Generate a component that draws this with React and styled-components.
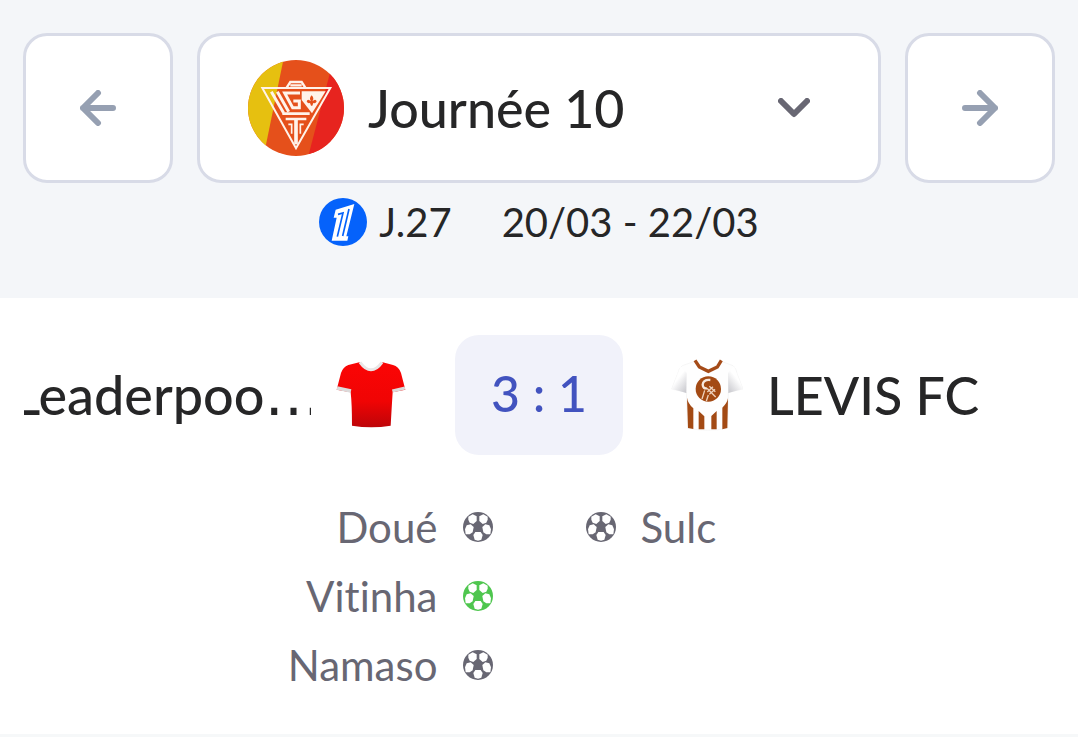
import React, { useState } from 'react';
import styled, { createGlobalStyle, ThemeProvider } from 'styled-components';

const theme = {
  colors: {
    page: '#ffffff',
    header: '#f4f6f9',
    border: '#d8dbe7',
    text: '#262627',
    muted: '#686773',
    arrow: '#96a0b2',
    score: '#4253bf',
    scoreBg: '#f1f2fa',
    green: '#4fc64f',
    divider: '#f6f8f9',
  },
};

const GlobalStyle = createGlobalStyle`
  * {
    box-sizing: border-box;
  }

  body {
    margin: 0;
    background: #ffffff;
    font-family: Lato, "Open Sans", sans-serif;
    font-variant-ligatures: none;
  }
`;

const Header = styled.header`
  padding: 33px 23px 52px;
  background: ${props => props.theme.colors.header};
`;

const DayPicker = styled.nav`
  display: flex;
  gap: 24px;
`;

const ArrowButton = styled.button`
  display: flex;
  flex: none;
  align-items: center;
  justify-content: center;
  width: 150px;
  height: 150px;
  padding: 0;
  border: 3px solid ${props => props.theme.colors.border};
  border-radius: 24px;
  background: ${props => props.theme.colors.page};
  color: ${props => props.theme.colors.arrow};
  cursor: pointer;
`;

const DayBox = styled.label`
  display: flex;
  flex: 1;
  align-items: center;
  gap: 24px;
  min-width: 0;
  padding: 0 68px 0 48px;
  border: 3px solid ${props => props.theme.colors.border};
  border-radius: 24px;
  background: ${props => props.theme.colors.page};
  color: ${props => props.theme.colors.muted};

  svg {
    flex: none;
  }
`;

const DaySelect = styled.select`
  flex: 1;
  min-width: 0;
  height: 72px;
  padding: 0;
  border: 0;
  outline: 0;
  appearance: none;
  background: transparent;
  color: ${props => props.theme.colors.text};
  font-family: inherit;
  font-size: 52px;
  font-weight: 500;
`;

const DayInfo = styled.div`
  display: flex;
  align-items: center;
  justify-content: center;
  gap: 50px;
  margin-top: 15px;
  color: ${props => props.theme.colors.text};
  font-size: 40px;
  line-height: 48px;
`;

const LeagueDay = styled.div`
  display: flex;
  align-items: center;
  gap: 12px;
`;

const Match = styled.article`
  padding: 37px 24px 45px;
  border-bottom: 3px solid ${props => props.theme.colors.divider};
`;

const Teams = styled.div`
  display: grid;
  grid-template-columns: 1fr 168px 1fr;
  align-items: center;
  gap: 48px;
`;

const Team = styled.div`
  display: flex;
  align-items: center;
  gap: 24px;
  min-width: 0;

  svg {
    flex: none;
  }
`;

const TeamName = styled.div`
  display: flex;
  flex: 1;
  justify-content: ${props => (props.$home ? 'center' : 'flex-start')};
  min-width: 0;
  overflow: hidden;
  color: ${props => props.theme.colors.text};
  font-size: ${props => (props.$home ? '54px' : '52px')};
  font-weight: 500;
  line-height: 64px;
  white-space: nowrap;
`;

const Ellipsis = styled.span`
  font-family: "DejaVu Sans", sans-serif;
  font-size: 58px;
  font-weight: 400;
`;

const Score = styled.div`
  padding: 28px 0 32px;
  border-radius: 24px;
  background: ${props => props.theme.colors.scoreBg};
  color: ${props => props.theme.colors.score};
  font-size: 50px;
  font-weight: 500;
  line-height: 60px;
  text-align: center;
`;

const Scorers = styled.div`
  display: grid;
  grid-template-columns: 1fr 1fr;
  gap: 91px;
  margin-top: 48px;
`;

const ScorerList = styled.ul`
  display: flex;
  flex-direction: column;
  align-items: ${props => (props.$home ? 'flex-end' : 'flex-start')};
  gap: 21px;
  margin: 0;
  padding: 0;
  list-style: none;
`;

const Scorer = styled.li`
  display: flex;
  align-items: center;
  gap: 24px;
  color: ${props => props.theme.colors.muted};
  font-size: 42px;
  line-height: 48px;
`;

const Arrow = ({ right }) => (
  <svg width="36" height="36" viewBox="0 0 36 36" fill="none" stroke="currentColor" strokeWidth="6" strokeLinecap="round" strokeLinejoin="round">
    {right ? <path d="M3 18h30M18 3l15 15l-15 15" /> : <path d="M33 18H3M18 3L3 18l15 15" />}
  </svg>
);

const Chevron = () => (
  <svg width="32" height="20" viewBox="0 0 32 20" fill="none" stroke="currentColor" strokeWidth="6" strokeLinecap="round" strokeLinejoin="round">
    <path d="M3 3l13 13L29 3" />
  </svg>
);

const Crest = () => (
  <svg width="96" height="96" viewBox="36 28 288 288" aria-hidden="true">
    <clipPath id="crest">
      <circle cx="180" cy="172" r="144" />
    </clipPath>
    <g clipPath="url(#crest)">
      <path fill="#e5501b" d="M36 28h288v288H36z" />
      <path fill="#e6c010" d="M36 28h106L83 316H36z" />
      <path fill="#e7241f" d="M292 28h32v288H217z" />
    </g>
    <g fill="none" stroke="#fff3ea">
      <path strokeWidth="6" d="M79 112h204L180 293z" />
      <path strokeWidth="7" d="M152 111l11-17h34l11 17M163 104h34" />
      <path strokeWidth="9" d="M106 123l37 64M124 123l34 60M192 127h-46l24 44h20v-20h-18" />
      <path strokeWidth="8" d="M139 189h82M149 205h62" />
      <path strokeWidth="11" d="M180 205v76" />
      <path strokeWidth="5" d="M157 221h10v28M203 221h-10v28" />
    </g>
    <path fill="#fff3ea" d="M197 122h72l-41 66l-31-40z" />
    <path fill="#e5501b" d="M227 134q9 9 2 18q10-10 13 0q-1 7-10 5l-3 8h-4l-3-8q-9 2-10-5q3-10 13 0q-7-9 2-18z" />
  </svg>
);

const LeagueLogo = () => (
  <svg width="48" height="48" viewBox="27 25 144 144" aria-hidden="true">
    <circle cx="99" cy="97" r="72" fill="#0562fb" />
    <path fill="#fff" d="M77 60L133 43L109 140h6l-3 13H65l15-69H71z" />
    <path fill="none" stroke="#0562fb" strokeWidth="5" d="M84 74l15-4L82 141M98 139L117 58" />
  </svg>
);

const RedShirt = () => (
  <svg width="72" height="72" viewBox="30 27 216 216" aria-hidden="true">
    <defs>
      <linearGradient id="red" x1="0" y1="0" x2="0" y2="1">
        <stop offset="0" stopColor="#fb0505" />
        <stop offset="0.6" stopColor="#f00404" />
        <stop offset="1" stopColor="#bd0509" />
      </linearGradient>
    </defs>
    <path fill="url(#red)" d="M103 37q35 46 70 0l31 8q17 4 24 24l13 50l-38 8q-2 30-6 100q-58 10-116 0q0-64-4-100l-42-8l13-50q6-18 22-24z" />
    <path fill="none" stroke="#e9e6e6" strokeWidth="9" d="M105 37q33 45 66 0" />
    <path fill="none" stroke="#dcdada" strokeWidth="10" d="M36 114l42 9M202 123l38-9" />
  </svg>
);

const StripedShirt = () => (
  <svg width="72" height="72" viewBox="33 42 216 216" aria-hidden="true">
    <defs>
      <linearGradient id="sleeveLeft" x1="0.2" y1="0" x2="0.9" y2="1">
        <stop offset="0.4" stopColor="#ffffff" />
        <stop offset="1" stopColor="#c9c9ce" />
      </linearGradient>
      <linearGradient id="sleeveRight" x1="0.8" y1="0" x2="0.1" y2="1">
        <stop offset="0.4" stopColor="#ffffff" />
        <stop offset="1" stopColor="#c9c9ce" />
      </linearGradient>
    </defs>
    <path fill="#fefefe" stroke="#f1f1f1" strokeWidth="2" d="M104 49l40 28l40-28l35 13q10 8 12 24l18 46l-44 10l-2 108q-60 11-120 0l-4-108l-44-10l18-46q4-18 14-24z" />
    <path fill="url(#sleeveLeft)" d="M62 64L36 132l43 12L80 84z" />
    <path fill="url(#sleeveRight)" d="M222 64l26 68l-43 12l-1-60z" />
    <path fill="none" stroke="#a54b18" strokeWidth="10" d="M105 46l13 20l27 13l27-13l12-20" />
    <circle cx="145" cy="132" r="38" fill="#a34a14" />
    <path fill="none" stroke="#f7e9df" strokeWidth="7" d="M151 105q-21-2-23 14q1 13 13 11" />
    <g fill="none" stroke="#eed2bd" strokeWidth="4">
      <path d="M141 130l26 26M148 124l18 16M142 141l17-16M148 148l17-15M134 136l-8 26M145 150l-6 18" />
    </g>
    <path fill="#a34a14" d="M81 158q3 18 19 32v62l-16-3zM116 198l17 16v39h-17zM154 213l16-15v55h-16zM187 188q14-13 17-28l-2 89l-15 4z" />
  </svg>
);

const Ball = () => (
  <svg width="32" height="32" viewBox="36 28 96 96" aria-hidden="true">
    <circle cx="84" cy="76" r="45" fill="currentColor" />
    <g fill="#fff">
      <path d="M55 45l13-7l12 6v14l-10 9l-11-4l-4-9z" />
      <path d="M113 45l-13-7l-12 6v14l10 9l11-4l4-9z" />
      <path d="M45 83l5-12l12-3l9 8l-3 16l-9 6H47z" />
      <path d="M123 83l-5-12l-12-3l-9 8l3 16l9 6h12z" />
      <path d="M76 91h16l6 9l-4 14l-10 3l-10-3l-4-14z" />
    </g>
  </svg>
);

const BallColor = styled.span`
  display: flex;
  color: ${props => (props.$highlight ? props.theme.colors.green : props.theme.colors.muted)};
`;

const homeScorers = [
  { name: 'Doué' },
  { name: 'Vitinha', highlight: true },
  { name: 'Namaso' },
];

const awayScorers = [{ name: 'Sulc' }];

const App = () => {
  const [day, setDay] = useState('10');

  return (
    <ThemeProvider theme={theme}>
      <GlobalStyle />
      <Header>
        <DayPicker>
          <ArrowButton type="button" aria-label="Journée précédente">
            <Arrow />
          </ArrowButton>
          <DayBox>
            <Crest />
            <DaySelect aria-label="Journée" value={day} onChange={e => setDay(e.target.value)}>
              <option value="10">Journée 10</option>
            </DaySelect>
            <Chevron />
          </DayBox>
          <ArrowButton type="button" aria-label="Journée suivante">
            <Arrow right />
          </ArrowButton>
        </DayPicker>
        <DayInfo>
          <LeagueDay>
            <LeagueLogo />
            <span>J.27</span>
          </LeagueDay>
          <span>20/03 - 22/03</span>
        </DayInfo>
      </Header>

      <Match>
        <Teams>
          <Team>
            <TeamName $home>
              <span>Leaderpoo</span>
              <Ellipsis>…</Ellipsis>
            </TeamName>
            <RedShirt />
          </Team>
          <Score>3 : 1</Score>
          <Team>
            <StripedShirt />
            <TeamName>LEVIS FC</TeamName>
          </Team>
        </Teams>
        <Scorers>
          <ScorerList $home>
            {homeScorers.map(scorer => (
              <Scorer key={scorer.name}>
                <span>{scorer.name}</span>
                <BallColor $highlight={scorer.highlight}>
                  <Ball />
                </BallColor>
              </Scorer>
            ))}
          </ScorerList>
          <ScorerList>
            {awayScorers.map(scorer => (
              <Scorer key={scorer.name}>
                <BallColor $highlight={scorer.highlight}>
                  <Ball />
                </BallColor>
                <span>{scorer.name}</span>
              </Scorer>
            ))}
          </ScorerList>
        </Scorers>
      </Match>
    </ThemeProvider>
  );
};

export default App;
